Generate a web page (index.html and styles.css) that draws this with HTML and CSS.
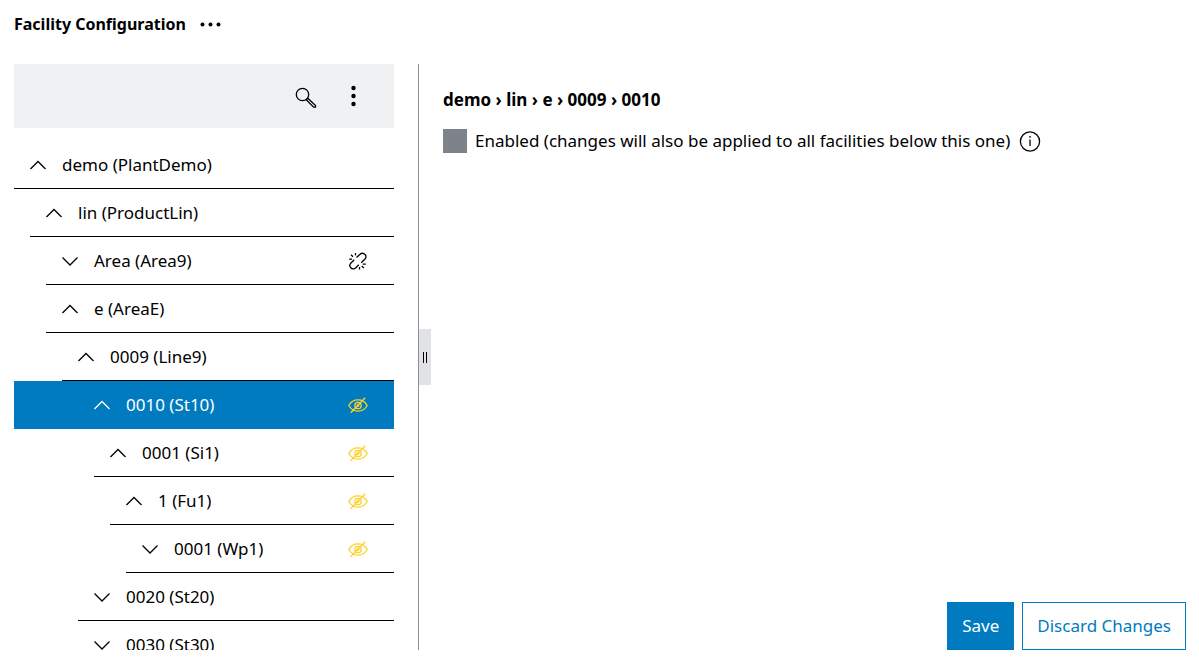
FILE: index.html
```html
<!DOCTYPE html>
<html lang="en">
<head>
<meta charset="utf-8">
<meta name="viewport" content="width=device-width, initial-scale=1">
<title>Facility Configuration</title>
<link rel="stylesheet" href="styles.css">
</head>
<body>
<svg class="symbols" aria-hidden="true">
  <symbol id="up" viewBox="0 0 16 16"><path d="M0.5 12 8 4.5 15.5 12"/></symbol>
  <symbol id="down" viewBox="0 0 16 16"><path d="M0.5 4.5 8 12 15.5 4.5"/></symbol>
  <symbol id="hidden" viewBox="0 0 20 16"><path d="M0.8 8.5C5 1 15 1 19.2 8.5C15 16 5 16 0.8 8.5ZM2.8 15.8 17.2 0.8"/><circle cx="10" cy="8.5" r="3.2"/><circle cx="10" cy="8.5" r="0.8"/></symbol>
</svg>
<header class="header">
  <h1 class="title">Facility Configuration</h1>
  <button class="icon-button" type="button" aria-label="More">
    <svg class="dots" viewBox="0 0 24 24"><circle cx="4.5" cy="12.5" r="2"/><circle cx="12.5" cy="12.5" r="2"/><circle cx="20.5" cy="12.5" r="2"/></svg>
  </button>
</header>
<main class="workspace">
  <aside class="sidebar">
    <div class="toolbar">
      <button class="icon-button" type="button" aria-label="Search">
        <svg class="icon" viewBox="0 0 24 24"><circle cx="8.5" cy="10.5" r="6.2"/><path d="M12.2 15.8 13.8 14.2 21.5 21.6V23.2H19.6Z"/></svg>
      </button>
      <button class="icon-button" type="button" aria-label="Options">
        <svg class="dots" viewBox="0 0 24 24"><circle cx="11.5" cy="4" r="2.2"/><circle cx="11.5" cy="12" r="2.2"/><circle cx="11.5" cy="20" r="2.2"/></svg>
      </button>
    </div>
    <ul class="tree">
      <li class="row"><button class="toggle" type="button" aria-label="Collapse"><svg class="chevron"><use href="#up"/></svg></button><span class="name">demo (PlantDemo)</span></li>
      <li class="row level-1"><button class="toggle" type="button" aria-label="Collapse"><svg class="chevron"><use href="#up"/></svg></button><span class="name">lin (ProductLin)</span></li>
      <li class="row level-2"><button class="toggle" type="button" aria-label="Expand"><svg class="chevron"><use href="#down"/></svg></button><span class="name">Area (Area9)</span>
        <svg class="status" viewBox="0 0 20 18"><path d="M8.5 5.5 11.8 2.5C13.6 0.9 15.8 1.2 17 2.5C18.2 3.8 18.3 5.6 16.8 7.2L13.2 10.8M10.8 12.8 7.8 15.8C6.2 17.3 4 17.1 2.8 15.8C1.6 14.5 1.4 12.6 3 11L6.2 7.8M1.2 7.2H4M3 2.8 5 4.8M7.5 1V3.4M14.8 12.2H17.8M13.8 14 15.8 16M11.5 15V17.5"/></svg></li>
      <li class="row level-2"><button class="toggle" type="button" aria-label="Collapse"><svg class="chevron"><use href="#up"/></svg></button><span class="name">e (AreaE)</span></li>
      <li class="row level-3"><button class="toggle" type="button" aria-label="Collapse"><svg class="chevron"><use href="#up"/></svg></button><span class="name">0009 (Line9)</span></li>
      <li class="row selected"><button class="toggle" type="button" aria-label="Collapse"><svg class="chevron"><use href="#up"/></svg></button><span class="name">0010 (St10)</span><svg class="status warning"><use href="#hidden"/></svg></li>
      <li class="row level-5"><button class="toggle" type="button" aria-label="Collapse"><svg class="chevron"><use href="#up"/></svg></button><span class="name">0001 (Si1)</span><svg class="status warning"><use href="#hidden"/></svg></li>
      <li class="row level-6"><button class="toggle" type="button" aria-label="Collapse"><svg class="chevron"><use href="#up"/></svg></button><span class="name">1 (Fu1)</span><svg class="status warning"><use href="#hidden"/></svg></li>
      <li class="row level-7"><button class="toggle" type="button" aria-label="Expand"><svg class="chevron"><use href="#down"/></svg></button><span class="name">0001 (Wp1)</span><svg class="status warning"><use href="#hidden"/></svg></li>
      <li class="row level-4"><button class="toggle" type="button" aria-label="Expand"><svg class="chevron"><use href="#down"/></svg></button><span class="name">0020 (St20)</span></li>
      <li class="row level-4"><button class="toggle" type="button" aria-label="Expand"><svg class="chevron"><use href="#down"/></svg></button><span class="name">0030 (St30)</span></li>
    </ul>
  </aside>
  <div class="splitter"><button class="handle" type="button" aria-label="Resize panel"><svg class="grip" viewBox="0 0 6 12"><path d="M1.5 1V12M4.5 1V12"/></svg></button></div>
  <section class="details">
    <h2 class="path">demo › lin › e › 0009 › 0010</h2>
    <div class="field">
      <input class="checkbox" type="checkbox" id="enabled">
      <label for="enabled">Enabled (changes will also be applied to all facilities below this one)</label>
      <button class="icon-button" type="button" aria-label="Information">
        <svg class="icon" viewBox="0 0 24 24"><circle cx="12" cy="12.5" r="9.6"/><path d="M12 10.5V17M12 7V8.8"/></svg>
      </button>
    </div>
    <div class="actions">
      <button class="button primary" type="button">Save</button>
      <button class="button" type="button">Discard Changes</button>
    </div>
  </section>
</main>
</body>
</html>
```
FILE: styles.css
```css
* {
  box-sizing: border-box;
}

body {
  display: flex;
  flex-direction: column;
  height: 100vh;
  margin: 0;
  padding: 12px 13px 14px 14px;
  overflow: hidden;
  background: #fff;
  color: #000;
  font: 17px/24px "Noto Sans", sans-serif;
}

button {
  padding: 0;
  border: 0;
  background: none;
  color: inherit;
  font: inherit;
  cursor: pointer;
}

svg {
  display: block;
  flex: none;
  fill: none;
  stroke: currentColor;
  stroke-width: 1.3;
}

.symbols {
  position: absolute;
  width: 0;
  height: 0;
}

.header {
  display: flex;
  gap: 12px;
  margin-bottom: 28px;
}

.title {
  margin: 0;
  font-size: 16px;
  font-weight: 700;
}

.path {
  margin: 0;
  font-size: 17px;
  font-weight: 700;
}

.icon-button,
.icon,
.dots {
  width: 24px;
  height: 24px;
}

.dots {
  fill: currentColor;
  stroke: none;
}

.workspace {
  display: flex;
  flex: 1;
  min-height: 0;
}

.sidebar {
  display: flex;
  flex-direction: column;
  flex: none;
  width: 380px;
  margin-right: 24px;
  overflow: hidden;
}

.toolbar {
  display: flex;
  flex: none;
  align-items: center;
  justify-content: flex-end;
  gap: 24px;
  height: 64px;
  margin-bottom: 13px;
  padding-right: 28px;
  background: #eff1f2;
}

.tree {
  flex: 1;
  min-height: 0;
  margin: 0;
  padding: 0;
  overflow: hidden;
  list-style: none;
}

.row {
  display: flex;
  align-items: center;
  gap: 16px;
  height: 48px;
  padding: 0 26px 0 16px;
  border-bottom: 1px solid #000;
}

.level-1 { margin-left: 16px; }
.level-2 { margin-left: 32px; }
.level-3 { margin-left: 48px; }
.level-4 { margin-left: 64px; }
.level-5 { margin-left: 80px; }
.level-6 { margin-left: 96px; }
.level-7 { margin-left: 112px; }

.selected {
  padding-left: 80px;
  border-color: #007bc0;
  background: #007bc0;
  color: #fff;
}

.toggle,
.chevron {
  flex: none;
  width: 16px;
  height: 16px;
}

.name {
  flex: 1;
}

.status {
  width: 20px;
  height: 18px;
}

.warning {
  height: 16px;
  color: #fcd12a;
}

.splitter {
  display: flex;
  flex: none;
  align-items: center;
  width: 13px;
  margin-right: 12px;
  border-left: 1px solid #8a9097;
}

.handle {
  display: grid;
  place-items: center;
  width: 12px;
  height: 56px;
  background: #e0e2e5;
}

.grip {
  width: 6px;
  height: 12px;
  stroke-width: 1;
}

.details {
  display: flex;
  flex: 1;
  flex-direction: column;
  min-width: 0;
  padding-top: 24px;
}

.field {
  display: flex;
  align-items: center;
  gap: 8px;
  margin-top: 17px;
}

.checkbox {
  appearance: none;
  flex: none;
  width: 24px;
  height: 24px;
  margin: 0;
  background: #7d8389;
}

.actions {
  display: flex;
  justify-content: flex-end;
  gap: 8px;
  margin-top: auto;
}

.button {
  height: 48px;
  padding: 0 14px;
  border: 1px solid #007bc0;
  color: #007bc0;
}

.primary {
  background: #007bc0;
  color: #fff;
}
```
